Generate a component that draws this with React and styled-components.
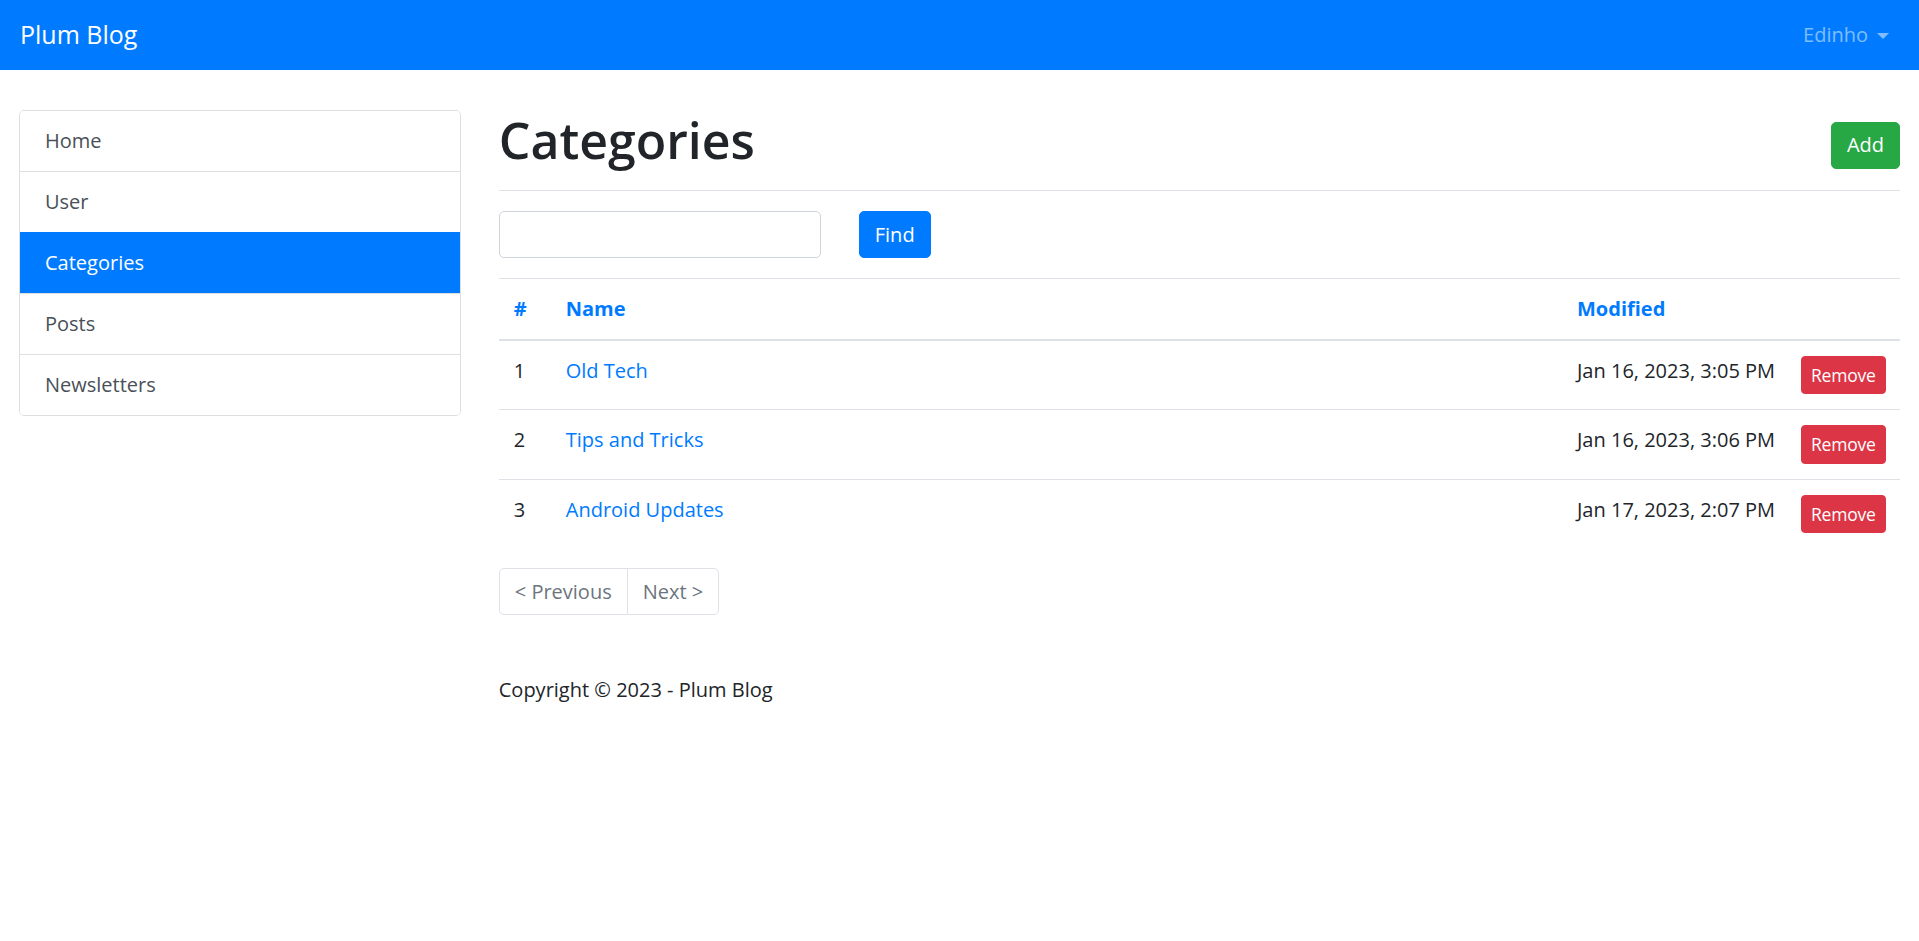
import React from 'react';
import styled, { createGlobalStyle } from 'styled-components';

const GlobalStyle = createGlobalStyle`
  html, body {
    margin: 0;
    padding: 0;
    background: #fff;
  }

  body {
    font-family: "Open Sans", "Noto Sans", sans-serif;
    font-size: 20px;
    line-height: 30px;
    color: #212529;
  }

  * {
    box-sizing: border-box;
  }
`;

const Navbar = styled.nav`
  display: flex;
  align-items: center;
  justify-content: space-between;
  height: 70px;
  padding: 10px 20px;
  background-color: #007bff;
`;

const Brand = styled.a`
  color: #fff;
  font-size: 25px;
  line-height: 37.5px;
  padding: 6.25px 0;
  text-decoration: none;
`;

const UserMenu = styled.a`
  display: flex;
  align-items: center;
  padding: 10px;
  color: rgba(255, 255, 255, 0.5);
  text-decoration: none;

  &::after {
    content: "";
    margin-left: 9px;
    margin-top: 2px;
    border-top: 6px solid;
    border-left: 6px solid transparent;
    border-right: 6px solid transparent;
  }
`;

const Row = styled.div`
  display: grid;
  grid-template-columns: 25% 75%;
  margin-top: 40px;
`;

const Column = styled.div`
  padding: 0 19px;
`;

const ListGroup = styled.div`
  display: flex;
  flex-direction: column;
  border: 1px solid rgba(0, 0, 0, 0.125);
  border-radius: 5px;
  overflow: hidden;
`;

const ListItem = styled.a`
  display: block;
  padding: 15px 25px;
  line-height: 30px;
  color: ${props => props.active ? '#fff' : '#495057'};
  background-color: ${props => props.active ? '#007bff' : '#fff'};
  border-top: 1px solid ${props => props.active ? '#007bff' : 'rgba(0, 0, 0, 0.125)'};
  text-decoration: none;

  &:first-child {
    border-top: 0;
  }
`;

const PageHeader = styled.div`
  display: flex;
  align-items: center;
  justify-content: space-between;
  padding-bottom: 10px;
  margin-bottom: 20px;
  border-bottom: 1px solid #dee2e6;
`;

const Title = styled.h1`
  margin: 0 0 10px;
  font-size: 50px;
  line-height: 60px;
  font-weight: 600;
`;

const Button = styled.button`
  font-family: inherit;
  font-size: ${props => props.small ? '17.5px' : '20px'};
  line-height: ${props => props.small ? '26.25px' : '30px'};
  padding: ${props => props.small ? '5px 9px' : '7.5px 15px'};
  letter-spacing: ${props => props.small ? '-0.2px' : 'normal'};
  border: 1px solid ${props => props.color};
  border-radius: ${props => props.small ? '4px' : '5px'};
  background-color: ${props => props.color};
  color: #fff;
  margin-left: ${props => props.offset || 0}px;
  cursor: pointer;
`;

const SearchForm = styled.form`
  display: flex;
  align-items: center;
  margin-bottom: 20px;
`;

const SearchInput = styled.input`
  width: 322px;
  height: 47px;
  padding: 7.5px 15px;
  font-family: inherit;
  font-size: 20px;
  border: 1px solid #ced4da;
  border-radius: 5px;
`;

const Table = styled.table`
  width: 100%;
  border-collapse: collapse;
  table-layout: fixed;
  margin-bottom: 20px;
`;

const HeadCell = styled.th`
  width: ${props => props.width || 'auto'};
  padding: 15px;
  text-align: left;
  vertical-align: bottom;
  color: #007bff;
  font-weight: 700;
  border-top: 1px solid #dee2e6;
  border-bottom: 2px solid #dee2e6;
`;

const Cell = styled.td`
  padding: 15px;
  vertical-align: top;
  border-top: 1px solid #dee2e6;
  white-space: nowrap;
`;

const NameLink = styled.a`
  color: #007bff;
  text-decoration: none;
`;

const Pagination = styled.ul`
  display: flex;
  list-style: none;
  padding: 0;
  margin: 0 0 20px;
`;

const PageLink = styled.li`
  padding: 10px 15px;
  line-height: 25px;
  color: #6c757d;
  border: 1px solid #dee2e6;
  background: #fff;

  &:first-child {
    border-radius: 5px 0 0 5px;
  }

  &:last-child {
    margin-left: -1px;
    border-radius: 0 5px 5px 0;
  }
`;

const Footer = styled.footer`
  padding-top: 40px;
`;

const categories = [
  { id: 1, name: 'Old Tech', modified: 'Jan 16, 2023, 3:05 PM' },
  { id: 2, name: 'Tips and Tricks', modified: 'Jan 16, 2023, 3:06 PM' },
  { id: 3, name: 'Android Updates', modified: 'Jan 17, 2023, 2:07 PM' },
];

const menu = ['Home', 'User', 'Categories', 'Posts', 'Newsletters'];

function App() {

  return (
    <>
      <GlobalStyle />
      <Navbar>
        <Brand href="#">Plum Blog</Brand>
        <UserMenu href="#">Edinho</UserMenu>
      </Navbar>

      <Row>
        <Column>
          <ListGroup>
            {menu.map(item => (
              <ListItem key={item} href="#" active={item === 'Categories'}>
                {item}
              </ListItem>
            ))}
          </ListGroup>
        </Column>

        <Column>
          <PageHeader>
            <Title>Categories</Title>
            <Button color="#28a745">Add</Button>
          </PageHeader>

          <SearchForm onSubmit={e => e.preventDefault()}>
            <SearchInput type="text" />
            <Button color="#007bff" offset={38}>Find</Button>
          </SearchForm>

          <Table>
            <thead>
              <tr>
                <HeadCell width="52px">#</HeadCell>
                <HeadCell>Name</HeadCell>
                <HeadCell width="224px">Modified</HeadCell>
                <HeadCell width="114px"></HeadCell>
              </tr>
            </thead>
            <tbody>
              {categories.map(category => (
                <tr key={category.id}>
                  <Cell>{category.id}</Cell>
                  <Cell>
                    <NameLink href="#">{category.name}</NameLink>
                  </Cell>
                  <Cell>{category.modified}</Cell>
                  <Cell>
                    <Button small color="#dc3545">Remove</Button>
                  </Cell>
                </tr>
              ))}
            </tbody>
          </Table>

          <Pagination>
            <PageLink>&lt; Previous</PageLink>
            <PageLink>Next &gt;</PageLink>
          </Pagination>

          <Footer>Copyright © 2023 - Plum Blog</Footer>
        </Column>
      </Row>
    </>
  );
}

export default App;
